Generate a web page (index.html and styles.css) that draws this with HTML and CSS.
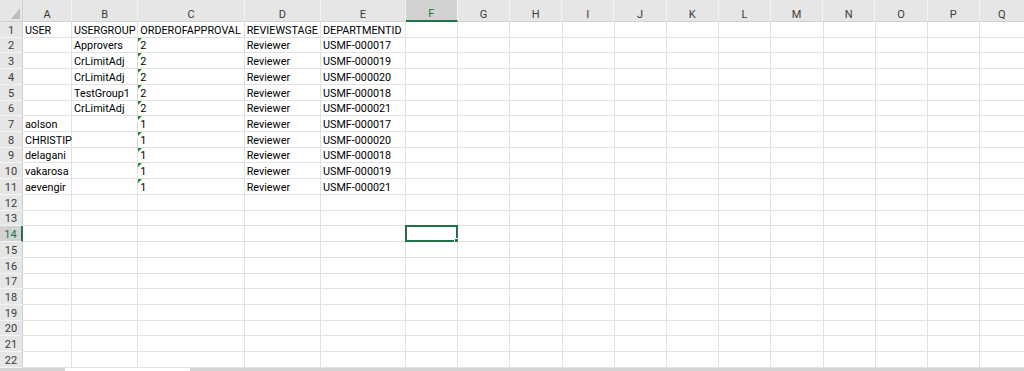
FILE: index.html
```html
<!DOCTYPE html>
<html>
<head>
<meta charset="utf-8">
<title>Sheet</title>
<link rel="stylesheet" href="styles.css">
</head>
<body>
<div class="sheet">
  <div class="colhdr">
    <div class="corner"><svg class="tri" width="9" height="11" viewBox="0 0 9 11"><polygon points="9,0 9,11 0,11" fill="#bdbdbd"/></svg></div>
    <div class="ch">A</div><div class="ch">B</div><div class="ch">C</div><div class="ch">D</div><div class="ch">E</div>
    <div class="ch sel">F</div><div class="ch">G</div><div class="ch">H</div><div class="ch">I</div><div class="ch">J</div>
    <div class="ch">K</div><div class="ch">L</div><div class="ch">M</div><div class="ch">N</div><div class="ch">O</div>
    <div class="ch">P</div><div class="ch last">Q</div>
  </div>

  <div class="row"><div class="rh">1</div><div class="c">USER</div><div class="c">USERGROUP</div><div class="c">ORDEROFAPPROVAL</div><div class="c">REVIEWSTAGE</div><div class="c">DEPARTMENTID</div><div class="rest"></div></div>
  <div class="row"><div class="rh">2</div><div class="c"></div><div class="c">Approvers</div><div class="c flag">2</div><div class="c">Reviewer</div><div class="c">USMF-000017</div><div class="rest"></div></div>
  <div class="row"><div class="rh">3</div><div class="c"></div><div class="c">CrLimitAdj</div><div class="c flag">2</div><div class="c">Reviewer</div><div class="c">USMF-000019</div><div class="rest"></div></div>
  <div class="row"><div class="rh">4</div><div class="c"></div><div class="c">CrLimitAdj</div><div class="c flag">2</div><div class="c">Reviewer</div><div class="c">USMF-000020</div><div class="rest"></div></div>
  <div class="row"><div class="rh">5</div><div class="c"></div><div class="c">TestGroup1</div><div class="c flag">2</div><div class="c">Reviewer</div><div class="c">USMF-000018</div><div class="rest"></div></div>
  <div class="row"><div class="rh">6</div><div class="c"></div><div class="c">CrLimitAdj</div><div class="c flag">2</div><div class="c">Reviewer</div><div class="c">USMF-000021</div><div class="rest"></div></div>
  <div class="row"><div class="rh">7</div><div class="c">aolson</div><div class="c"></div><div class="c flag">1</div><div class="c">Reviewer</div><div class="c">USMF-000017</div><div class="rest"></div></div>
  <div class="row"><div class="rh">8</div><div class="c">CHRISTIP</div><div class="c"></div><div class="c flag">1</div><div class="c">Reviewer</div><div class="c">USMF-000020</div><div class="rest"></div></div>
  <div class="row"><div class="rh">9</div><div class="c">delagani</div><div class="c"></div><div class="c flag">1</div><div class="c">Reviewer</div><div class="c">USMF-000018</div><div class="rest"></div></div>
  <div class="row"><div class="rh">10</div><div class="c">vakarosa</div><div class="c"></div><div class="c flag">1</div><div class="c">Reviewer</div><div class="c">USMF-000019</div><div class="rest"></div></div>
  <div class="row"><div class="rh">11</div><div class="c">aevengir</div><div class="c"></div><div class="c flag">1</div><div class="c">Reviewer</div><div class="c">USMF-000021</div><div class="rest"></div></div>
  <div class="row"><div class="rh">12</div><div class="c"></div><div class="c"></div><div class="c"></div><div class="c"></div><div class="c"></div><div class="rest"></div></div>
  <div class="row"><div class="rh">13</div><div class="c"></div><div class="c"></div><div class="c"></div><div class="c"></div><div class="c"></div><div class="rest"></div></div>
  <div class="row"><div class="rh active">14</div><div class="c"></div><div class="c"></div><div class="c"></div><div class="c"></div><div class="c"></div><div class="rest"><div class="selbox"><span class="handle"></span></div></div></div>
  <div class="row"><div class="rh">15</div><div class="c"></div><div class="c"></div><div class="c"></div><div class="c"></div><div class="c"></div><div class="rest"></div></div>
  <div class="row"><div class="rh">16</div><div class="c"></div><div class="c"></div><div class="c"></div><div class="c"></div><div class="c"></div><div class="rest"></div></div>
  <div class="row"><div class="rh">17</div><div class="c"></div><div class="c"></div><div class="c"></div><div class="c"></div><div class="c"></div><div class="rest"></div></div>
  <div class="row"><div class="rh">18</div><div class="c"></div><div class="c"></div><div class="c"></div><div class="c"></div><div class="c"></div><div class="rest"></div></div>
  <div class="row"><div class="rh">19</div><div class="c"></div><div class="c"></div><div class="c"></div><div class="c"></div><div class="c"></div><div class="rest"></div></div>
  <div class="row"><div class="rh">20</div><div class="c"></div><div class="c"></div><div class="c"></div><div class="c"></div><div class="c"></div><div class="rest"></div></div>
  <div class="row"><div class="rh">21</div><div class="c"></div><div class="c"></div><div class="c"></div><div class="c"></div><div class="c"></div><div class="rest"></div></div>
  <div class="row"><div class="rh">22</div><div class="c"></div><div class="c"></div><div class="c"></div><div class="c"></div><div class="c"></div><div class="rest"></div></div>

  <div class="bottom"><div class="seg1"></div><div class="seg2"></div><div class="seg3"></div></div>
</div>
</body>
</html>
```

FILE: styles.css
```css
* { box-sizing: border-box; }
html, body { margin: 0; padding: 0; }
body {
  background: #ffffff;
  font-family: Roboto, "Liberation Sans", sans-serif;
  font-size: 10.8px;
  color: #000000;
  overflow: hidden;
}
.sheet {
  width: 1024px;
  height: 371px;
  display: flex;
  flex-direction: column;
}
.colhdr {
  flex: 0 0 22px;
  display: grid;
  grid-template-columns: 23px 49px 66.3px 106.4px 76.3px 84.7px repeat(11, 52.2px) 1fr;
  background: #e6e6e6;
}
.corner {
  position: relative;
  border-right: 1px solid #d0d0d0;
  border-bottom: 1px solid #d0d0d0;
}
.tri {
  position: absolute;
  right: 2px;
  bottom: 2px;
}
.ch {
  display: flex;
  align-items: flex-end;
  justify-content: center;
  line-height: 12px;
  font-size: 11px;
  color: #3a3a3a;
  border-right: 1px solid #f4f4f4;
  border-bottom: 1px solid #d0d0d0;
}
.ch.last { border-right: none; }
.ch.sel {
  background: #d2d2d2;
  color: #217346;
  border-bottom: 2px solid #217346;
}
.row {
  flex: 0 0 15.727px;
  display: grid;
  grid-template-columns: 23px 49px 66.3px 106.4px 76.3px 84.7px 1fr;
}
.rh {
  display: flex;
  align-items: flex-end;
  justify-content: center;
  line-height: 12px;
  font-size: 11px;
  background: #e6e6e6;
  color: #3a3a3a;
  border-right: 1px solid #d0d0d0;
  border-bottom: 1px solid #f4f4f4;
}
.rh.active {
  background: #d2d2d2;
  color: #217346;
  border-right: 2px solid #217346;
}
.c {
  display: flex;
  align-items: flex-end;
  line-height: 12px;
  padding-left: 2px;
  white-space: nowrap;
  border-right: 1px solid #e1e1e1;
  border-bottom: 1px solid #e1e1e1;
}
.flag { position: relative; }
.flag::before {
  content: "";
  position: absolute;
  left: 0;
  top: 0;
  border-top: 4px solid #1f8a3b;
  border-right: 4px solid transparent;
}
.rest {
  position: relative;
  border-bottom: 1px solid #e1e1e1;
  background-image: repeating-linear-gradient(to right, transparent 0, transparent 51.2px, #e1e1e1 51.2px, #e1e1e1 52.2px);
}
.selbox {
  position: absolute;
  left: -1px;
  top: -1px;
  width: 53.6px;
  height: 17px;
  border: 2px solid #217346;
}
.handle {
  position: absolute;
  right: -3px;
  bottom: -3px;
  width: 5px;
  height: 5px;
  background: #217346;
  border: 1px solid #ffffff;
}
.bottom {
  flex: 1 1 auto;
  display: flex;
}
.seg1 { flex: 0 0 65px; background: #d4d4d4; }
.seg2 { flex: 0 0 125px; background: #ffffff; }
.seg3 { flex: 1 1 auto; background: #d4d4d4; }
```
